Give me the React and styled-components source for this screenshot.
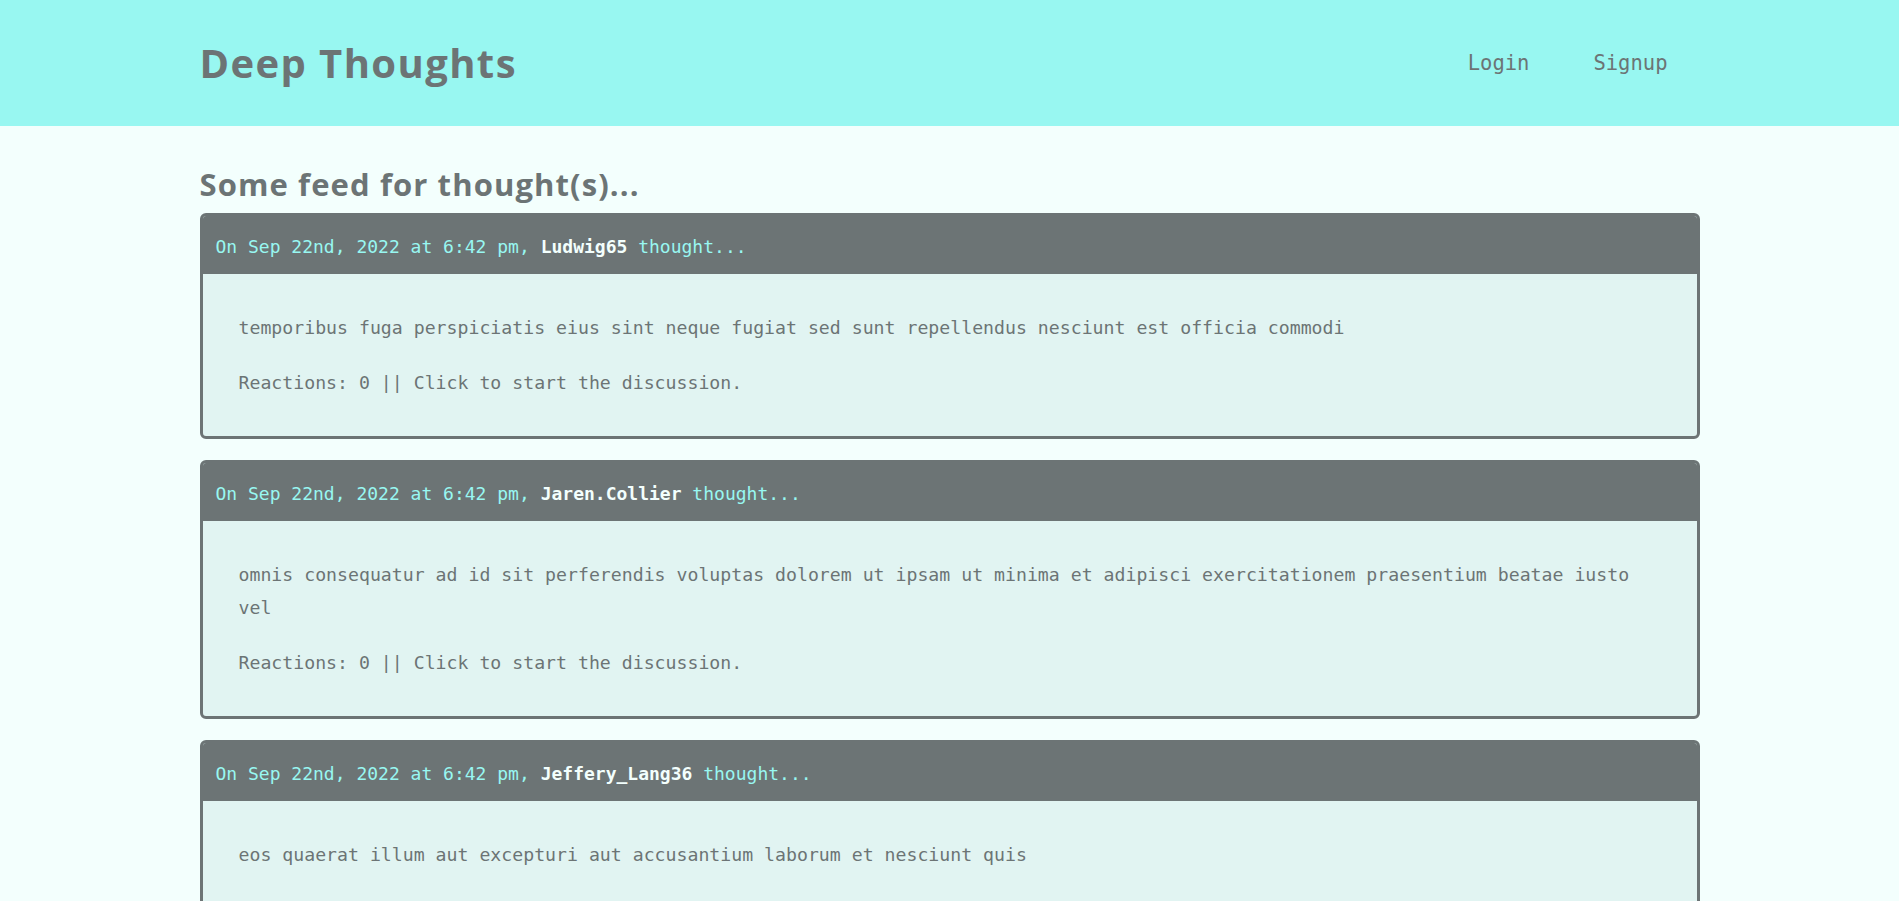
import React from 'react';
import styled, { createGlobalStyle } from 'styled-components';

const GlobalStyle = createGlobalStyle`
  * {
    box-sizing: border-box;
  }

  body {
    margin: 0;
    background: #f3fffd;
    color: #6c7475;
    font-family: 'DejaVu Sans Mono', 'Liberation Mono', monospace;
  }
`;

const thoughts = [
  {
    id: 1,
    username: 'Ludwig65',
    createdAt: 'Sep 22nd, 2022 at 6:42 pm',
    text: 'temporibus fuga perspiciatis eius sint neque fugiat sed sunt repellendus nesciunt est officia commodi',
    reactionCount: 0,
  },
  {
    id: 2,
    username: 'Jaren.Collier',
    createdAt: 'Sep 22nd, 2022 at 6:42 pm',
    text: 'omnis consequatur ad id sit perferendis voluptas dolorem ut ipsam ut minima et adipisci exercitationem praesentium beatae iusto vel',
    reactionCount: 0,
  },
  {
    id: 3,
    username: 'Jeffery_Lang36',
    createdAt: 'Sep 22nd, 2022 at 6:42 pm',
    text: 'eos quaerat illum aut excepturi aut accusantium laborum et nesciunt quis',
    reactionCount: 0,
  },
];

const HeaderBar = styled.header`
  background: #98f7f1;
  height: 126px;
`;

const Container = styled.div`
  width: 1500px;
  margin: 0 auto;
`;

const HeaderInner = styled(Container)`
  height: 100%;
  display: flex;
  align-items: center;
  justify-content: space-between;
`;

const Logo = styled.h1`
  margin: 0 0 2px;
  font-family: 'Open Sans', 'Liberation Sans', sans-serif;
  font-weight: 700;
  font-size: 40px;
  letter-spacing: 1.4px;
  color: #6c7475;
`;

const Nav = styled.nav`
  display: flex;
`;

const NavLink = styled.a`
  margin: 0 32px;
  font-size: 20.5px;
  color: #6c7475;
  text-decoration: none;
  cursor: pointer;
`;

const Main = styled(Container)`
  padding-top: 38px;
`;

const FeedTitle = styled.h3`
  margin: 0 0 9px;
  font-family: 'Open Sans', 'Liberation Sans', sans-serif;
  font-weight: 700;
  font-size: 31px;
  line-height: 40px;
  letter-spacing: 1.1px;
  color: #6c7475;
`;

const Feed = styled.div`
  display: flex;
  flex-direction: column;
  gap: 21px;
`;

const Card = styled.div`
  border: 3px solid #6c7475;
  border-radius: 6px;
  overflow: hidden;
  background: #e1f4f2;
`;

const CardHeader = styled.p`
  margin: 0;
  padding: 17px 13px 14px;
  background: #6c7475;
  color: #98f7f1;
  font-size: 18px;
  line-height: 27px;

  strong {
    color: #f3fffd;
  }
`;

const CardBody = styled.div`
  padding: 37px 36px 37px;
  display: flex;
  flex-direction: column;
  gap: 22px;
  font-size: 18.2px;
  line-height: 33px;

  p {
    margin: 0;
  }
`;

function ThoughtCard({ thought }) {
  return (
    <Card>
      <CardHeader>
        On {thought.createdAt}, <strong>{thought.username}</strong> thought...
      </CardHeader>
      <CardBody>
        <p>{thought.text}</p>
        <p>Reactions: {thought.reactionCount} || Click to start the discussion.</p>
      </CardBody>
    </Card>
  );
}

export default function App() {
  return (
    <>
      <GlobalStyle />
      <HeaderBar>
        <HeaderInner>
          <Logo>Deep Thoughts</Logo>
          <Nav>
            <NavLink>Login</NavLink>
            <NavLink>Signup</NavLink>
          </Nav>
        </HeaderInner>
      </HeaderBar>
      <Main>
        <FeedTitle>Some feed for thought(s)...</FeedTitle>
        <Feed>
          {thoughts.map((thought) => (
            <ThoughtCard key={thought.id} thought={thought} />
          ))}
        </Feed>
      </Main>
    </>
  );
}
